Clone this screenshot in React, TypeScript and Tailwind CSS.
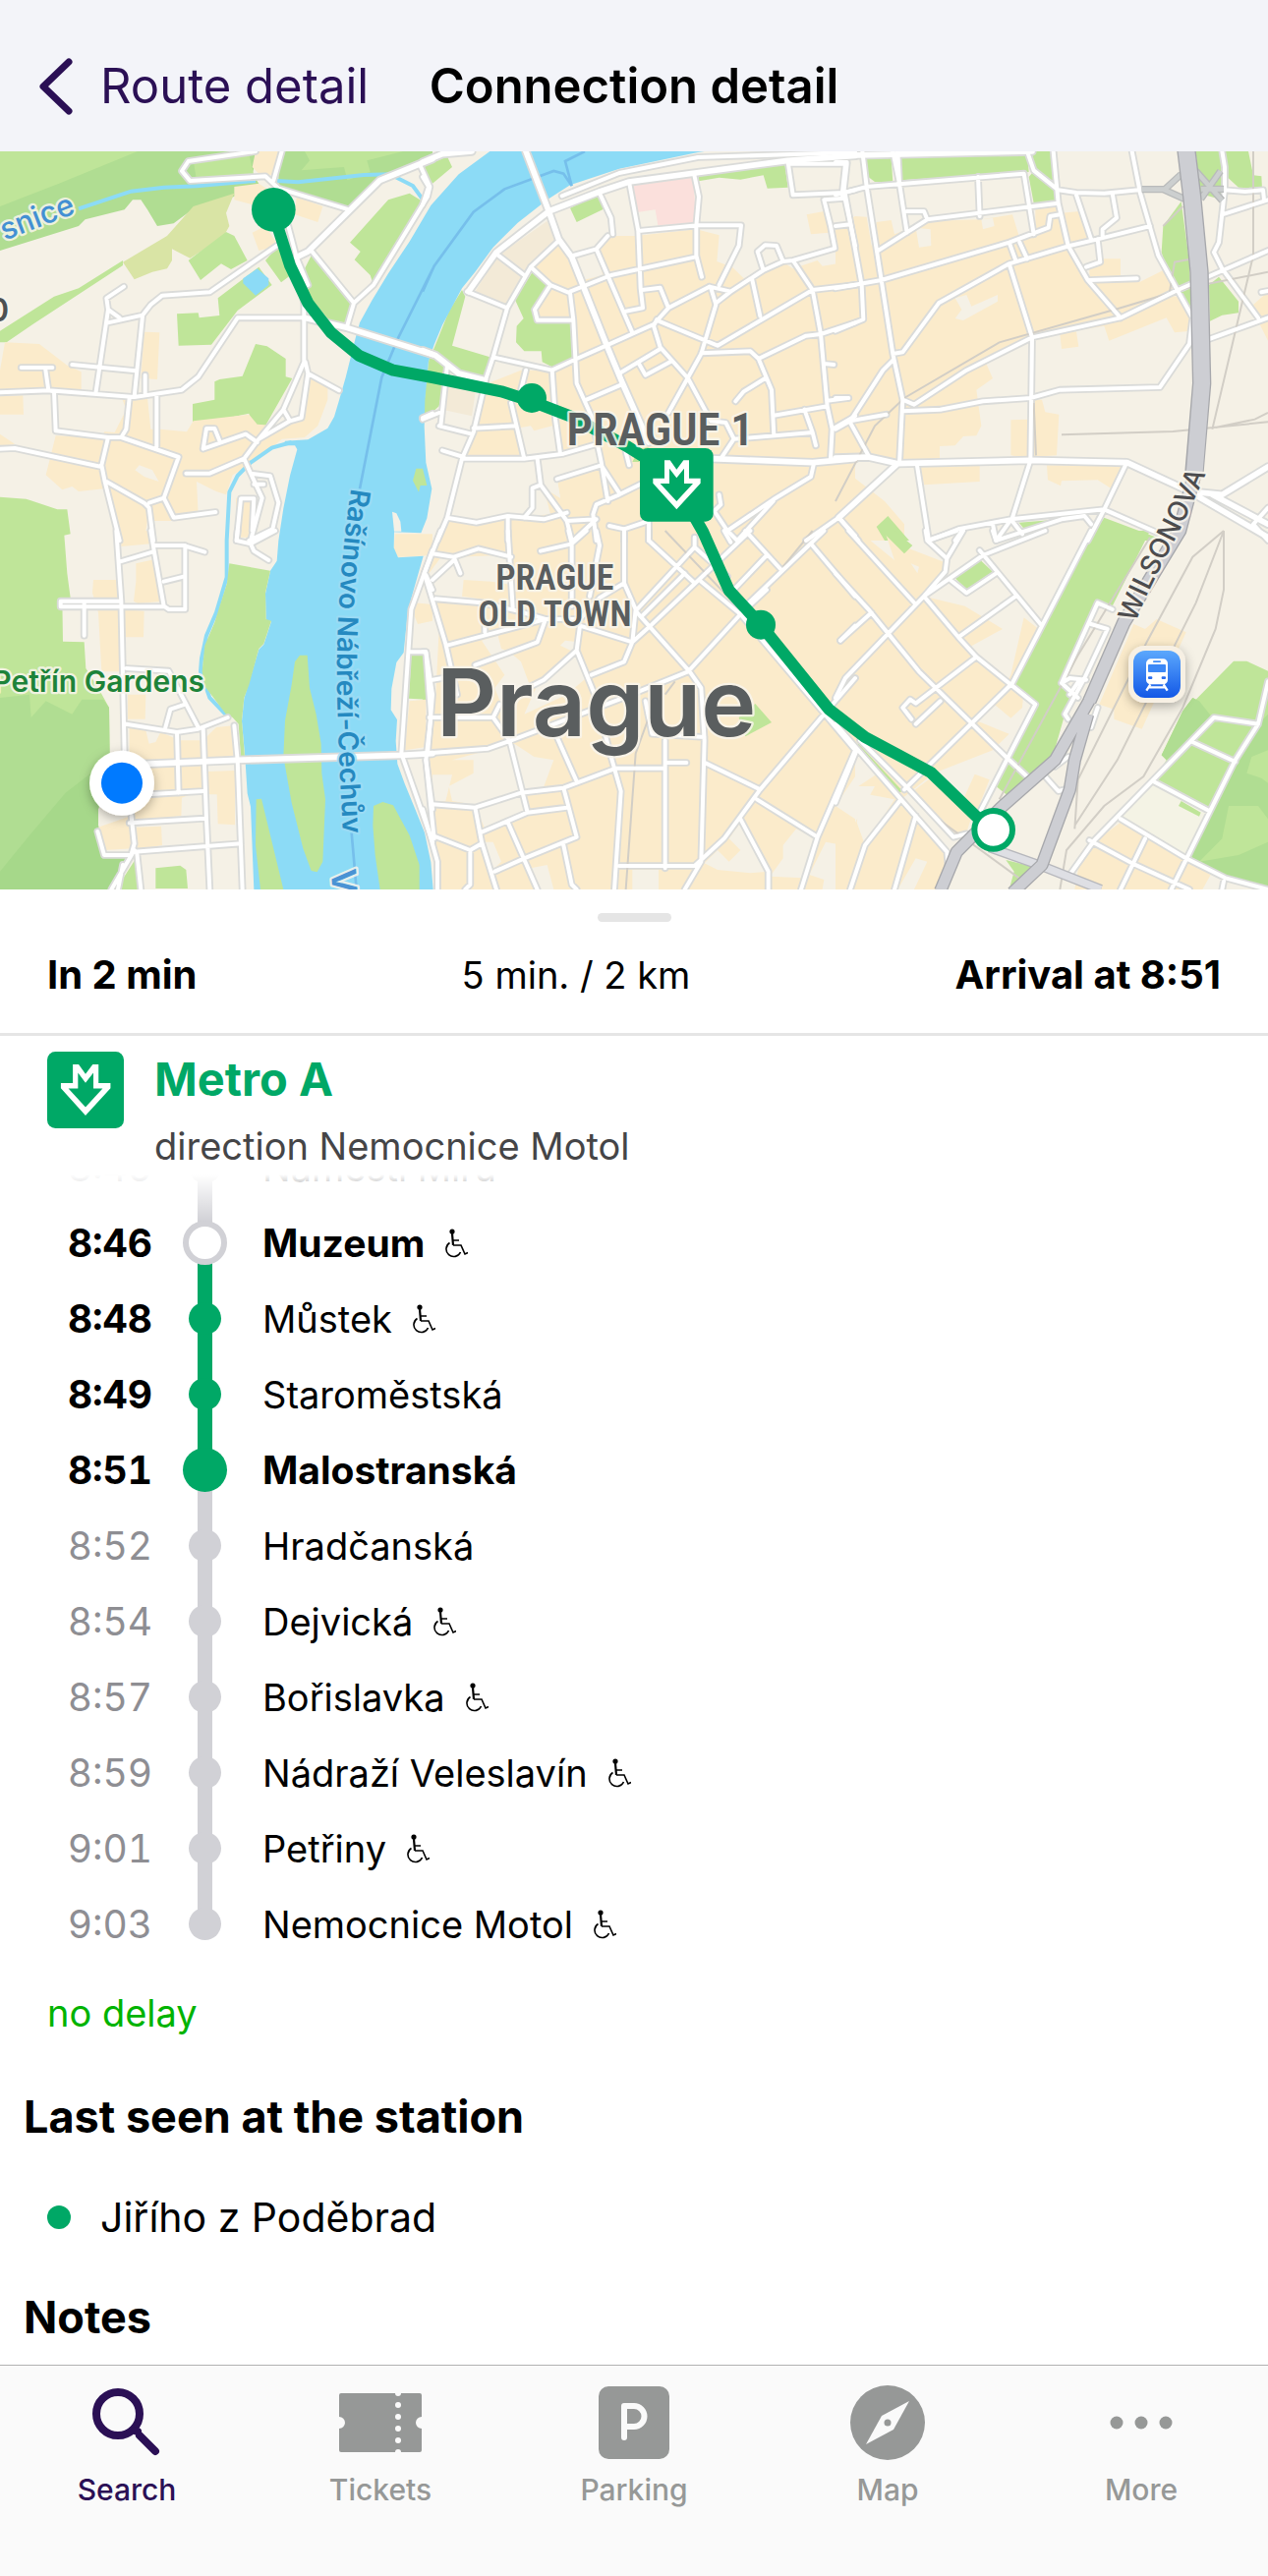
import { clsx } from "clsx";

type Area = { fill: string; d: string };

type Tile = {
  x: number;
  y: number;
  areas: Area[];
  roads: string;
  avenues?: string;
  rails?: string;
};

const GREEN = "#bfe599";
const FOREST = "#b0dd92";
const CITY = "#fbebcb";
const LAND = "#f5f1e6";
const WATER = "#8cdbf6";
const METRO = "#00a866";

// The map is split into six tiles, each with its own local coordinates
const tiles: Tile[] = [
  {
    x: 0,
    y: -12,
    areas: [
      { fill: FOREST, d: "M0 12H790L770 80 790 110 715 150 600 180 530 232 480 240 450 190 430 160H405L380 190 260 220 240 240 0 315Z" },
      { fill: GREEN, d: "M0 12H420L180 110 0 180ZM590 40 760 22 775 85 600 100Z" },
      { fill: FOREST, d: "M850 12H1320V30L1160 100 1060 185 850 120Z" },
      { fill: GREEN, d: "M870 12H930L945 40 920 70 1050 60 1060 100 1130 75 1120 40 1230 12Z" },
      { fill: "#d9e4a5", d: "M375 350 510 270 590 180 715 140 690 200 700 240 680 275 580 338 525 310V345L510 370 465 380 410 403Z" },
      { fill: GREEN, d: "M0 595V560L165 455 240 430 375 345V360L100 540 20 595ZM690 258 715 270 755 345 705 372 675 355 612 405 575 345ZM665 460 790 365 830 420 725 498 645 602 545 605 540 508 605 505 608 520 670 513Z" },
      { fill: GREEN, d: "M780 600 815 607 872 645V700L892 705 810 850 765 845 760 812 665 832 588 837V783L655 770V715L670 708 740 698ZM1185 160 1250 140 1290 165 1140 420 1130 390 1082 343 1100 318 1068 290ZM955 320 1080 475 1058 550 1020 545 940 450 930 370ZM810 345 850 300 900 380 858 412Z" },
      { fill: GREEN, d: "M0 1067 80 1073 175 1105H205L215 1180 192 1185V1200H0Z" },
      { fill: WATER, d: "M785 370 820 400V420L780 452 742 415V400Z" },
      { fill: CITY, d: "M15 595 120 600 205 665 248 685V745L0 740V680ZM0 760 70 757 72 815H0ZM440 563 487 565 480 708 430 705ZM780 12H850L830 85 790 80 770 60ZM715 120 790 110 850 150 790 180 715 160ZM905 150 985 180 970 228 900 205ZM770 260 810 240 850 300 790 315Z" },
      { fill: CITY, d: "M170 880 310 885 370 765H450L460 860H490L570 868 590 835 760 815 785 845 850 850 920 820 945 695 1000 720V770L970 850 930 885 860 890 780 960 745 980 710 1000 690 1060 660 1050 640 1040 600 1020 605 1120 530 1140H450L440 1200H365L330 1040 240 1050 220 1035 190 1045 140 1000 160 920ZM0 875 45 905 0 915ZM720 1070H770V1190H720Z" },
      { fill: LAND, d: "M425 970 465 985 485 1020 440 1005 412 985ZM180 760H370L385 800 350 870 180 855Z" },
    ],
    roads:
      "M780 12 575 42 555 72 580 102 810 88 850 125 1065 190M860 12 835 100M905 335 880 240M1280 50 1312 120 1305 150 1140 420 1080 475 1058 550M950 315 1080 475M905 335 940 420M905 335 928 480V655L865 800 790 890 745 950M928 520H725L605 700 555 740 410 762 150 742 0 748M845 300 640 442 495 452 460 480 435 512 330 535M378 425 325 460 330 495 365 520M330 495 293 745M435 515 410 760M65 672H160M138 672 148 742 165 745 170 865 330 885 370 885 545 945 500 1070 455 1085M220 663 415 682M443 695V755M478 755V915M395 765 385 860 370 885M330 885 310 970 320 1020 365 1200M0 920 45 918 310 975M325 1020 440 1085 455 1100 468 1200M500 1070 530 1130 658 1113M672 900 655 858H630L620 920 750 875 785 900M568 995H640L745 950 765 995 825 1003 850 1085 832 1165 760 1200M775 1028H805M765 995 800 1070 765 1200M775 1072H735L722 1200M775 1072 770 1170M932 655 940 690 920 825 885 835 865 800M940 690 1035 742M885 835 790 890M1290 825 1320 812",
    avenues: "M1320 35 1160 100 940 318 905 335M928 520 1058 550 1320 632",
  },
  {
    x: 1290,
    y: -12,
    areas: [
      { fill: CITY, d: "M570 270 650 270 835 250 905 268 898 348 945 365 980 400 1100 350 1130 370 1205 345 1220 362 1265 355 1262 255 1320 240V1200H45L75 1130 160 1140 390 1120 370 1040 420 1070 410 1010 545 965 535 910 420 940H130L160 850 175 800 200 720 300 680 395 680 465 650 460 530 350 525 345 500 390 425 335 365 410 290 490 405 550 390 530 320ZM1172 205 1225 195 1240 260 1185 265Z" },
      { fill: LAND, d: "M300 855 330 850 340 865 395 850 420 935 310 950ZM350 955 535 915 545 965 410 1010 420 1070 360 1030ZM0 840 50 860 150 880 125 950 75 1130 45 1040 0 1035Z" },
      { fill: GREEN, d: "M0 60 75 28 90 60 30 110ZM450 185 535 145 552 188 470 228ZM842 82 1105 48 1115 122 1052 125 1040 85 970 98 905 92 842 103ZM335 380 385 420 340 500 350 532 458 535V640L395 670 365 655 362 622H310L285 595 287 545 308 522 282 465ZM120 435 130 455 90 605 205 640 195 700 170 705 75 660 30 625 80 500ZM20 640 75 665 50 790 0 835 10 720ZM640 960 660 920 690 915 660 960Z" },
      { fill: "#fbe0dc", d: "M635 112 825 82 835 230 718 238 710 190 655 198Z" },
      { fill: "#f3ead7", d: "M230 330 380 225 415 285 310 385ZM160 440 225 335 305 395 255 485ZM75 690 165 720 150 820 60 800Z" },
    ],
    roads:
      "M425 148 600 78 840 30 1320 15M0 90 18 120 0 175M225 325 310 390M415 285 330 365 258 490 215 640 195 700 155 870 120 950 75 1130 45 1200M135 440 258 490M330 365 390 420 450 445 460 527 470 720 515 820 545 960 565 1080M390 420 342 495 350 527H460M540 140 575 215 580 265M565 270 530 310 460 330M530 310 640 565M630 105 658 255 665 430 672 490 620 500M450 440 575 390 830 335M658 255 840 238H972L965 300 905 420M828 80 843 150 835 240V330L852 395M670 435 725 428 750 490M875 425 750 490 705 540 560 605 470 645 395 680 215 640M395 680 405 830 420 935M875 425 940 440 1040 375 1100 348 1130 345 1258 308 1245 240 1225 160 1290 155M1040 375 1022 318 1045 298 1080 300 1100 348M1005 400 1030 515M1115 45 1130 145 1285 138 1320 130M1115 50H1295L1285 138 1320 300M880 430 895 480 850 630 750 810M895 475 940 440M720 530 900 605 1190 435 1320 420M1130 345 1190 435 1215 570 1235 790 1250 860 1245 950M715 525 705 545 725 610 810 705 880 835 925 840 950 890 910 950M725 615 600 690M660 660 680 695 755 655M605 725 500 770M850 628 1000 622 1025 645 1065 740 1072 880M1025 645 1170 575 1215 570 1320 535M1045 705 980 745 955 775M1072 818 1235 790M1165 800 1190 870 1200 910M950 890 1190 870M1235 773 1298 765M1225 660 1255 663M1250 860 1320 820M120 950H310L430 935 535 905M270 780 310 950M155 857 285 850M315 680 300 740M60 925 125 945M50 850 150 875M75 665 55 850M0 830 50 810M350 950 360 1030 440 1140 530 1135M410 1012 545 970 600 1055M360 1030 335 1040V1100L310 1130M75 1130 165 1145 260 1125 370 1135 440 1115M260 1125V1200M440 1140 455 1200M460 1200 530 1135M620 930 630 970M530 1200 520 1120 530 1090 600 1060 670 1025M570 1155 615 1165 690 1140M615 1165V1200M690 1140V1200M905 1060 910 1090 890 1110 930 1170 1070 1075 1185 1005 1195 960M960 1200 1070 1080M930 1170 960 1200M1170 1200 1270 1130 1320 1085M1270 1130 1320 1185",
    avenues:
      "M1320 25 1115 40 630 105 540 135 385 195 225 320 140 440M315 12 385 195 415 280 455 335 560 600 610 720 690 900M0 45 60 20 150 12M0 620 40 635 110 690 190 710M880 950 1190 962 1320 950",
  },
  {
    x: 2550,
    y: -12,
    areas: [
      { fill: CITY, d: "M0 245 60 210 95 212 110 300 125 228 170 222 180 265 280 225 445 220 540 205 560 270 610 250V190L680 175 690 200 745 195 775 280 715 300 770 400 870 520 1000 450 1080 460 1085 560 1035 565 1010 520 835 590 820 545 600 580 500 620 460 660 480 705 430 740 445 850 430 880 390 882 365 910 318 912V950L200 960 100 945 0 945Z" },
      { fill: CITY, d: "M775 370 800 340H870V390L930 410 1000 375 1040 440 870 510 775 405ZM685 570 735 562 742 608 690 615ZM535 832 590 830V950L535 940ZM605 770H630L640 808 682 815 675 940 600 945ZM258 975 440 972V1020L270 1030ZM645 970H880L840 1040 800 1015 690 1018 687 1033 648 1015ZM0 970H50L60 1010 150 1080 210 1150V1200H0ZM1275 480 1320 440V590L1295 540Z" },
      { fill: LAND, d: "M245 245 290 250 292 300 255 305ZM365 460 400 450 415 485 495 450V470L390 528 365 522 385 495ZM445 220 480 215 485 240 450 250Z" },
      { fill: GREEN, d: "M90 30H170L175 105H120L100 90ZM200 30 585 15 590 75 200 100ZM600 12H665L675 165 605 170 590 90 605 72ZM1100 12H1260L1275 85 1300 88 1302 125 1230 122 1195 90 1180 160 1110 140ZM1055 165 1080 350 1085 500 1060 460 1020 400 995 320 1000 240ZM1140 420 1170 395 1230 470V505L1180 512 1143 530ZM560 1145 690 1135 580 1170ZM820 1130 980 1190 960 1200H770ZM125 1158 160 1125 225 1200H150Z" },
    ],
    roads:
      "M82 12 95 120 140 405 175 630 205 770 195 965M175 12 195 110 218 260M190 12 195 110M0 145 95 120 575 80 605 265M435 90 440 210M218 195H270L280 220 130 315M280 220 680 170M30 50 20 145M0 45H35M30 145 80 420 85 525 0 560M0 240 45 235M0 430 140 405 530 290 650 245 655 210 685 205M530 290 550 345M562 290 585 340M585 12 605 70 680 130 735 138 820 140 925 130M665 12 680 170 710 300 770 405 870 520M735 145 780 280M845 140 858 215 815 250V275M800 280 808 350 765 365M775 405 920 400M905 12 930 140 985 330 1090 520 1080 600 990 732 685 740 595 765 450 775 320 800 205 805M175 650 145 680 45 835 0 860M175 630 205 625 315 475 530 355 715 300 800 280 960 240M530 355 600 580 595 955 540 1130 490 1200M205 770 240 785 400 680 600 580 870 520 1045 435 1320 315M45 835 155 815M45 840 100 940M0 765H40M10 1130 70 1200M248 965 285 1200 375 1165 535 1135 820 1105 885 970M480 1150 490 1200M535 1135 570 1180M365 1200 390 1165M820 1105 980 1175M820 1105 770 1200M1180 12 1188 60V130L1170 290 1155 320 1180 370 1290 520M1188 130 1250 135 1305 130 1308 160M1180 205 1320 160M1140 585 1320 520M1320 1100 1275 1150 1320 1200M1300 442 1320 438M490 1200 690 1135 760 1125 780 1150",
    avenues:
      "M0 25 600 12M0 948 100 945 190 965 595 955 890 962 1080 1050 1320 1190M1320 975 1180 1060 1080 1050M1150 1060 1320 1150M190 965 10 1130",
    rails:
      "M1275 12V330L1150 860M690 877 1030 867 1320 838M0 1080 120 850 210 765 500 595 870 490 1070 430 1320 380M1160 855 1280 830 1320 810M605 780 612 940M1000 240 1060 180M1020 440 1035 350 1090 340",
  },
  {
    x: 0,
    y: 1158,
    areas: [
      { fill: GREEN, d: "M0 0H195L205 130 215 205 190 210 192 338 257 340 262 420 300 480 333 540 335 700 300 850V900L320 990H410L340 1095H0Z" },
      { fill: FOREST, d: "M0 510 90 500 95 570 140 520 220 560 250 515 315 515 333 540 335 700 300 850V900L320 990H400L340 1095H0Z" },
      { fill: "#a6d88a", d: "M330 700 300 850V900L318 990H400L340 1095H0V1040L90 930 200 800Z" },
      { fill: GREEN, d: "M475 1030 550 1022 568 1035 573 1092H475ZM370 1070 415 1000 420 1095H360ZM1255 380H1300L1305 515 1248 512Z" },
      { fill: CITY, d: "M370 0H455L460 40 370 48ZM285 150H360L370 240 440 245 438 325H378V430H310L300 250 282 190ZM415 100 470 88 500 215 420 222 408 215 415 155ZM390 500H445L443 575H390ZM395 600 445 610 455 650 475 645 490 615 550 640H620L660 600 712 595 720 685 620 700V790L555 815 553 870 400 890V800L450 700 395 680ZM635 735 717 732V898L665 895 662 805H635ZM410 905 492 902 495 960 410 975ZM300 905 400 870 405 970 320 975ZM1250 520 1300 515V660L1235 670ZM1265 220 1320 225V275L1275 285 1265 260ZM1205 10H1320V75L1215 80 1202 60Z" },
    ],
    roads:
      "M355 0 370 215 380 680 410 955M365 95 465 65M475 45H560L625 65M460 0 470 60 500 230 515 240H565V45M500 155 560 140M370 215H185V232H500M257 215V320M385 420 515 428 605 600M385 590 540 615 605 605 695 570M565 530 520 545 505 600M540 615 545 800M620 605 630 880 640 1095M715 595 725 700 740 1095M450 805 620 795M395 892 625 878M410 980 735 955M298 918 318 990 400 990 410 955M410 975 340 1095M418 985 430 1095M375 1020 360 1095M725 0 722 30 765 40 775 62 820 90M765 40 840 0M1320 60 1255 240 1225 680 1320 950M1250 370H1300L1320 500 1305 680M1300 700 1320 850M1300 135 1320 180",
    avenues: "M440 712 725 700 1225 685 1320 680",
  },
  {
    x: 1290,
    y: 1158,
    areas: [
      { fill: CITY, d: "M55 0 10 130 50 300 40 500 20 700 35 850 45 1095H1320V0Z" },
      { fill: LAND, d: "M100 80 250 75 260 100 270 165 210 155 125 150 120 200 190 210 275 240 40 200 5 150 60 75ZM180 335 230 320 240 360 265 370 300 400 330 480 240 530 220 480 250 440ZM90 700 200 670 280 650 340 690 400 700 370 780 180 840 90 825 80 780 155 740V700ZM30 745H90L70 825H30ZM470 370 510 440 440 500 310 560 350 470ZM165 850 300 810 310 860 190 910ZM640 1035H720V1095H640ZM970 890 1055 1040 1000 1045 900 1035 860 1015 900 975 935 1010 970 975 935 940ZM1100 960 1140 910 1200 940 1160 1060 1060 1055 1100 1000ZM190 950 215 950 240 1010 215 1035ZM1320 750V880L1260 840ZM1230 950 1285 960 1270 1095 1220 1095 1225 1065 1180 1050ZM330 1030 380 1020 400 1095H350ZM420 350 435 335 475 340 460 370Z" },
      { fill: GREEN, d: "M1015 528 1065 585 985 628 965 570ZM0 380 12 400 15 515H0Z" },
    ],
    roads:
      "M55 0 5 130 70 345 105 500M30 70 95 80 170 55 270 80M95 80 115 130M95 90 30 150M40 208 180 220 290 245 375 270H480L540 205 615 160M260 0 275 235M445 0 455 40V230M360 62 455 40 500 0M530 0 540 45 510 200M615 0V160L650 240 640 340 615 400 515 440M690 0V30L825 155M650 245 830 50M670 260 800 130M690 295 1000 0M640 340 690 295M75 350 375 270 350 340 160 410M190 290V310M640 340 480 290 470 365 370 455 320 480M470 365 525 500 575 690 605 795 585 1095M650 245 815 430 850 480 860 640 850 1010 800 1095M30 455 60 450M0 370H10L25 570 10 700 35 940M20 570 215 570 235 530M215 570 265 640 320 860M0 680 200 665 270 640 600 515 810 430 970 255 1050 180M970 255 850 155M410 630 470 765M30 835 160 845 300 800 430 785 590 725H740M430 785 470 935 310 1000 220 1040M160 845 180 950 225 1095M180 920 320 860 440 845M260 890 350 1095M430 960 455 1080 470 1095M30 930 145 975V1080L130 1095M145 975 180 955M0 850 45 1010V1095M740 640V1030M600 1023H830L920 940 1030 790 1225 560 1320 450M680 520 700 620 860 630M745 708H805M865 710 1030 790M1020 820 1205 935M970 880 1055 1040V1095M1320 670 1205 935 1155 1095M970 255 1320 670M985 230 1225 0M985 0 1095 120M950 180 1050 75M920 0 940 35M1185 40 1320 200M1275 335 1320 290M830 20V50L930 140",
    rails: "M740 0 930 200M690 570 650 680 620 1095M1190 0 1100 110M770 460 740 500",
  },
  {
    x: 2550,
    y: 1158,
    areas: [
      { fill: CITY, d: "M0 0H70L180 90 150 0 200 45 330 95V130L270 200 395 230 510 300 400 360 540 465 490 530 430 580 530 620 480 670 300 740 200 820 0 590ZM535 440 575 265 620 300 550 460 575 480 570 540 535 572 485 530ZM230 800 310 740 420 860 400 920 360 935ZM400 880 390 820 425 743 470 760 430 860ZM0 850 60 890 120 780 70 780 130 740 340 980V1095H240L280 1010 245 1000 190 1095H0ZM910 285 945 300 980 270 1070 310 935 605 850 575V545L805 530ZM870 890 1145 1050 1120 1095H730L750 980Z" },
      { fill: LAND, d: "M230 100 255 110 250 130ZM60 680 150 740 90 750ZM75 800 180 820 90 960 65 890Z" },
      { fill: GREEN, d: "M790 0H960L840 240 800 220 690 460 740 510 700 560 660 700 525 808 490 780 610 530 545 465ZM365 145 440 88 480 125 400 178ZM140 0H180L235 45 210 70ZM1215 398H1255L1320 428V1090L1190 1060 1085 1000 1145 855 1110 872 1047 840 970 765 1010 700 995 685 1060 550 1090 510 1100 515ZM520 1005 620 1030 560 1095H530L545 1040ZM70 650 205 795 190 800 60 660Z" },
      { fill: FOREST, d: "M1320 560V1090L1190 1060 1085 1000 1145 855 1220 700 1290 590ZM1090 510 1110 520 1150 570 1010 700 995 685 1060 550Z" },
      { fill: GREEN, d: "M1320 670 1270 690 1255 740 1300 755 1320 770ZM1200 840 1290 840 1320 880V950L1230 990 1110 1010 1180 940Z" },
      { fill: "#f4f3e5", d: "M970 770 1140 860 1070 1000 870 880Z" },
      { fill: GREEN, d: "M1055 825 1115 860 1110 872 1047 840Z" },
    ],
    roads:
      "M0 130 105 245 255 430 520 690 590 755M40 0 245 225M0 510 30 450 270 200 450 75 640 0M15 335 110 250M275 0 280 30 340 85 335 125 270 200M280 30 370 0M340 85 390 0M440 60 630 290M270 200 375 325 430 385 610 530 440 860M780 0 540 465 210 790M350 150 400 190 490 130M375 325 550 200M430 385 245 527 228 515 205 540 232 575M245 590 320 520M480 0 490 30M0 590 200 820 340 980 345 1040M75 640 225 790 360 935 400 925M65 670 0 830M200 820 90 960 45 1095M245 870 180 1095M640 750 680 795 700 790M710 690 670 720M1320 460 1290 590 1220 700 1025 1095M1290 590 1155 570 790 945 715 1050M1090 645 1220 705M970 765 1140 855M870 880 1070 1000 1190 1060 1320 1095M775 945 905 1015 1080 1095M945 940 870 1095M1185 1070 1180 1095M845 240 800 220 690 465 740 510M780 285 830 300 760 450 700 560 710 575M690 465 715 450 765 455M715 500 745 455M800 540 780 600",
    rails:
      "M1185 0V180L1160 300 1060 540 940 750 820 840 705 975 685 1095M1185 0 1090 80 950 340 740 760 730 910M1185 0 1100 220 860 700 730 900M960 20 740 380 500 820M320 885 560 1060",
  },
];

// Two passes: grey casing below, white surface above
function Roads({ casing }: { casing: boolean }) {
  return (
    <g fill="none" stroke={casing ? "#dadbd9" : "#ffffff"} strokeLinecap="round" strokeLinejoin="round">
      {tiles.map((tile) => (
        <g key={`${tile.x}-${tile.y}`} transform={`translate(${tile.x} ${tile.y})`}>
          <path d={tile.roads} strokeWidth={casing ? 23 : 12} />
          {tile.avenues && <path d={tile.avenues} strokeWidth={casing ? 28 : 17} />}
        </g>
      ))}
    </g>
  );
}

const metroMark =
  "M75 37H92L112 65 133 37H150V92H185V107L112 187 40 107V92H75ZM90 62V108H62L112 162 162 108H135V62L112 91Z";

function MetroIcon({ className }: { className?: string }) {
  return (
    <svg viewBox="0 0 224 224" className={className} aria-hidden="true">
      <rect width="224" height="224" rx="24" fill={METRO} />
      <path d={metroMark} fill="#fff" fillRule="evenodd" />
    </svg>
  );
}

function CityMap() {
  return (
    <svg viewBox="0 0 3870 2253" className="block w-full" role="img" aria-label="Map of Prague with the metro route">
      <defs>
        <path id="embankment" d="M1072 1028C1045 1200 1032 1380 1028 1560C1028 1750 1040 1950 1050 2150" />
        <path id="wilsonova" d="M3466 1440C3510 1310 3590 1200 3690 960" />
        <linearGradient id="station" x1="0" y1="0" x2="0" y2="1">
          <stop offset="0" stopColor="#5ba8fd" />
          <stop offset="1" stopColor="#1358e6" />
        </linearGradient>
        <filter id="shadow" x="-50%" y="-50%" width="200%" height="200%">
          <feDropShadow dx="0" dy="10" stdDeviation="16" floodOpacity="0.3" />
        </filter>
      </defs>

      <rect width="3870" height="2253" fill={LAND} />
      {tiles.map((tile) => (
        <g key={`${tile.x}-${tile.y}`} transform={`translate(${tile.x} ${tile.y})`}>
          {tile.areas.map((area) => (
            <path key={area.d} d={area.d} fill={area.fill} />
          ))}
        </g>
      ))}

      {/* Vltava, its islands and the side streams */}
      <path
        fill={WATER}
        d="M1495 0 1400 70 1315 165 1250 275 1185 373 1135 455 1098 523 1085 570 1055 690 1035 760 1020 810 1000 845 940 880 870 884 865 898 900 898 907 910 885 990 865 1090 850 1188 845 1250 825 1280 810 1350 812 1430 828 1435 805 1505 790 1520 760 1620 745 1670 738 1740 748 1850 755 1960 765 2000 775 2253H1322L1315 2170 1296 2080 1268 2010 1235 1930 1213 1870 1208 1800 1212 1735 1193 1705 1195 1640 1210 1560 1232 1530 1245 1400 1265 1330 1292 1235 1215 1240 1202 1210 1203 1162 1285 1165 1303 1120 1318 1030 1300 950 1295 840 1297 760 1308 640 1325 590 1350 530 1410 418 1450 368 1505 293 1580 218 1670 148 1740 103 1890 53 2130 3 2150 0Z"
      />
      <path
        fill="none"
        stroke={WATER}
        strokeWidth="12"
        d="M890 888 830 905 765 950 725 990 700 1040 692 1188V1300L660 1408 630 1478 615 1548 612 1588 640 1668 690 1720M240 175 400 122 500 110 600 106 780 90M845 90 910 94 1110 72 1190 70 1260 105 1300 160"
      />
      <path fill="none" stroke="#76bfeb" strokeWidth="8" d="M1098 1030 1165 690 1215 570 1320 360M1290 428 1325 350 1445 185 1540 115 1690 60 1720 68 1745 105 1725 30 1785 0M1073 2080 1088 2253" />
      <path
        fill={GREEN}
        d="M700 1258 825 1280 810 1348 812 1428 828 1433 805 1503 790 1518 760 1628 745 1668 738 1738 747 1848H735L728 1748 710 1728 690 1718 625 1633 617 1588 625 1508 655 1438 693 1318ZM915 1538H938L945 1638 965 1718 980 1808 982 1898 993 1978 985 2168 968 2200 950 2196 925 2128 890 1988 865 1848 870 1738 890 1628 900 1558ZM782 1978 798 1976 830 2108 865 2253H795L780 2118ZM1140 1998 1168 1986 1200 1996 1250 2088 1280 2178V2253H1160L1145 2148 1138 2058ZM1270 968H1290L1303 1020 1283 1020 1278 1040 1260 1005Z"
      />
      <path fill={LAND} d="M1197 1100 1210 1105 1222 1130 1225 1160H1203Z" />

      <Roads casing />
      <g fill="none" stroke="#d2cec6" strokeWidth="6">
        {tiles.map((tile) => (
          <path key={`${tile.x}-${tile.y}`} d={tile.rails} transform={`translate(${tile.x} ${tile.y})`} />
        ))}
      </g>
      <Roads casing={false} />

      {/* Expressway */}
      <g fill="none" strokeLinejoin="round">
        <path stroke="#b9bbbb" strokeWidth="22" d="M3485 116H3555L3605 70M3550 116 3615 145M3650 60 3730 150M3725 60 3665 145M3665 115H3735" />
        <path stroke="#cccfcf" strokeWidth="14" d="M3485 116H3555L3605 70M3550 116 3615 145M3650 60 3730 150M3725 60 3665 145M3665 115H3735" />
        <path stroke="#b7b8bd" strokeWidth="30" d="M3020 2125 3170 2178 3360 2253" />
        <path stroke="#dedfe4" strokeWidth="22" d="M3020 2125 3170 2178 3360 2253" />
        <path stroke="#a7a8ac" strokeWidth="40" d="M3335 1658 3220 1858 3055 2003 2920 2138 2870 2258M3320 1718 3280 1858 3265 1948 3180 2178 3090 2263" />
        <path stroke="#a7a8ac" strokeWidth="58" d="M3620 -10 3638 138 3660 368 3668 708 3645 978" />
        <path stroke="#a7a8ac" strokeWidth="44" d="M3650 970 3600 1158 3430 1438 3325 1678" />
        <path stroke="#cdced3" strokeWidth="32" d="M3335 1658 3220 1858 3055 2003 2920 2138 2870 2258M3320 1718 3280 1858 3265 1948 3180 2178 3090 2263" />
        <path stroke="#cdced3" strokeWidth="50" d="M3620 -10 3638 138 3660 368 3668 708 3645 988" />
        <path stroke="#cdced3" strokeWidth="36" d="M3650 970 3600 1158 3430 1438 3325 1678" />
      </g>

      {/* Metro line A */}
      <path
        fill="none"
        stroke={METRO}
        strokeWidth="36"
        strokeLinejoin="round"
        d="M835 178 850 238 885 348 940 463 1010 553 1095 623 1200 668 1320 690 1530 733 1623 763 1740 808 1910 898 1990 948 2065 1020 2145 1160 2225 1340 2322 1445 2530 1703 2640 1788 2840 1895 2990 2040"
      />
      <g fill={METRO}>
        <circle cx="835" cy="178" r="67" />
        <circle cx="1623" cy="753" r="45" />
        <circle cx="2322" cy="1445" r="45" />
      </g>
      <circle cx="3032" cy="2071" r="58" fill="#fff" stroke={METRO} strokeWidth="18" />

      <g
        className="font-['Inter',sans-serif]"
        stroke="#f8f5ec"
        strokeOpacity="0.85"
        strokeWidth="14"
        strokeLinejoin="round"
        paintOrder="stroke"
        fontWeight="600"
      >
        <g fill="#5a5e5f" textAnchor="middle" className="font-['Roboto_Condensed','Open_Sans_Condensed','Roboto',sans-serif]" fontWeight="600">
          <text x="2015" y="898" fontSize="140">PRAGUE 1</text>
          <text x="1693" y="1338" fontSize="108">PRAGUE</text>
          <text x="1693" y="1450" fontSize="108">OLD TOWN</text>
        </g>
        <text x="1820" y="1784" fontSize="284" fill="#5a5e5f" textAnchor="middle">Prague</text>
        <text x="624" y="1650" fontSize="90" fill="#1d8339" textAnchor="end">Petřín Gardens</text>
        <text x="-36" y="518" fontSize="96" fill="#4d5051">0</text>
        <text fontSize="92" fill="#4390d3" fontWeight="500" transform="translate(14 272) rotate(-21)">snice</text>
        <text fontSize="104" fill="#4a93d4" transform="translate(1010 2192) rotate(86)">V</text>
        <text fontSize="84" fill="#2589c0" stroke="#9ddcf5">
          <textPath href="#embankment">Rašínovo Nábřeží-Čechův</textPath>
        </text>
        <text fontSize="83" fill="#4c4c4e" fontWeight="500">
          <textPath href="#wilsonova">WILSONOVA</textPath>
        </text>
      </g>

      <g transform="translate(1953 906)">
        <rect width="224" height="224" rx="24" fill={METRO} />
        <path d={metroMark} fill="#fff" fillRule="evenodd" />
      </g>

      {/* Main railway station */}
      <g transform="translate(3459 1524)">
        <rect x="-15" y="-15" width="174" height="174" rx="48" fill="#f7f0e4" filter="url(#shadow)" />
        <rect width="144" height="144" rx="36" fill="url(#station)" />
        <rect x="39" y="25" width="66" height="78" rx="14" fill="#fff" />
        <rect x="60" y="31" width="24" height="5" rx="2" fill="#3f8cf7" />
        <rect x="45" y="42" width="54" height="24" rx="3" fill="#3c88f6" />
        <rect x="45" y="79" width="13" height="8" rx="3" fill="#2a6dee" />
        <rect x="86" y="79" width="13" height="8" rx="3" fill="#2a6dee" />
        <path d="M52 103 40 122M92 103 104 122M48 112H96" stroke="#fff" strokeWidth="7" fill="none" />
      </g>

      <circle cx="372" cy="1928" r="99" fill="#fff" filter="url(#shadow)" />
      <circle cx="372" cy="1928" r="63" fill="#007aff" />
    </svg>
  );
}

type Stop = {
  time: string;
  name: string;
  accessible?: boolean;
  kind: "passed" | "start" | "ride" | "end" | "next";
};

const stops: Stop[] = [
  { time: "8:45", name: "Náměstí Míru", kind: "passed" },
  { time: "8:46", name: "Muzeum", accessible: true, kind: "start" },
  { time: "8:48", name: "Můstek", accessible: true, kind: "ride" },
  { time: "8:49", name: "Staroměstská", kind: "ride" },
  { time: "8:51", name: "Malostranská", kind: "end" },
  { time: "8:52", name: "Hradčanská", kind: "next" },
  { time: "8:54", name: "Dejvická", accessible: true, kind: "next" },
  { time: "8:57", name: "Bořislavka", accessible: true, kind: "next" },
  { time: "8:59", name: "Nádraží Veleslavín", accessible: true, kind: "next" },
  { time: "9:01", name: "Petřiny", accessible: true, kind: "next" },
  { time: "9:03", name: "Nemocnice Motol", accessible: true, kind: "next" },
];

function WheelchairIcon() {
  return (
    <svg viewBox="0 0 24 30" className="h-[30px] w-6 shrink-0" fill="none" stroke="currentColor" role="img" aria-label="Wheelchair accessible">
      <circle cx="8" cy="3" r="2.6" fill="currentColor" stroke="none" />
      <path strokeWidth="2.2" d="M8 5 9 17" />
      <path strokeWidth="1.6" d="M9 12H15M9 17H17L21 26 24 24.500" />
      <path strokeWidth="1.6" d="M5.500 14.500A7.600 7.600 0 1 0 16.500 24" />
    </svg>
  );
}

function StopRow({ stop, last }: { stop: Stop; last: boolean }) {
  const { kind } = stop;
  const onRide = kind === "start" || kind === "ride" || kind === "end";
  return (
    <li className="flex h-[77px] items-center">
      <time className={clsx("w-[155px] text-right text-[39px] tabular-nums", onRide ? "font-bold" : "text-[#8e8e93]")}>
        {stop.time}
      </time>
      <div className="ml-[31px] flex h-full w-[45px] flex-col items-center">
        <span className={clsx("-mb-1 w-[15px] flex-1", kind === "ride" || kind === "end" ? "bg-[#00a866]" : "bg-[#d1d1d6]")} />
        <span
          className={clsx(
            "z-10 shrink-0 rounded-full",
            kind === "start" && "size-[45px] border-[6px] border-[#d1d1d6] bg-white",
            kind === "ride" && "size-[33px] bg-[#00a866]",
            kind === "end" && "size-[45px] bg-[#00a866]",
            (kind === "passed" || kind === "next") && "size-[33px] bg-[#d1d1d6]",
          )}
        />
        <span
          className={clsx(
            "-mt-1 w-[15px] flex-1",
            kind === "start" || kind === "ride" ? "bg-[#00a866]" : last ? "bg-transparent" : "bg-[#d1d1d6]",
          )}
        />
      </div>
      <span className={clsx("ml-9", (kind === "start" || kind === "end") && "text-[39px] font-bold")}>{stop.name}</span>
      {stop.accessible && (
        <span className="ml-5">
          <WheelchairIcon />
        </span>
      )}
    </li>
  );
}

const tabs = [
  {
    label: "Search",
    icon: (
      <svg viewBox="0 0 76 76" className="size-[76px]" fill="none" stroke="currentColor">
        <circle cx="29" cy="29" r="22" strokeWidth="8" />
        <path d="M46 46 49 47M51 51 67 67" strokeWidth="8" strokeLinecap="round" />
      </svg>
    ),
  },
  {
    label: "Tickets",
    icon: (
      <svg viewBox="0 0 84 76" className="h-[76px] w-[84px]" fill="currentColor">
        <path d="M2 8H57A3 3 0 0 0 63 8H82A2 2 0 0 1 84 10V32A6 6 0 0 0 84 44V66A2 2 0 0 1 82 68H63A3 3 0 0 0 57 68H2A2 2 0 0 1 0 66V44A6 6 0 0 0 0 32V10A2 2 0 0 1 2 8Z" />
        <g fill="#fafafa">
          <circle cx="60" cy="20" r="3" />
          <circle cx="60" cy="32" r="3" />
          <circle cx="60" cy="44" r="3" />
          <circle cx="60" cy="56" r="3" />
        </g>
      </svg>
    ),
  },
  {
    label: "Parking",
    icon: (
      <svg viewBox="0 0 76 76" className="size-[76px]" fill="none">
        <rect x="2" y="1" width="72" height="74" rx="10" fill="currentColor" />
        <path d="M28 53V21H38A10 10 0 0 1 38 42H28" stroke="#fafafa" strokeWidth="6" strokeLinecap="round" strokeLinejoin="round" />
      </svg>
    ),
  },
  {
    label: "Map",
    icon: (
      <svg viewBox="0 0 76 76" className="size-[76px]">
        <circle cx="38" cy="38" r="38" fill="currentColor" />
        <path d="M60 16 32 31 16 60 44 45Z" fill="#fafafa" />
        <circle cx="38" cy="38" r="3.500" fill="currentColor" />
      </svg>
    ),
  },
  {
    label: "More",
    icon: (
      <svg viewBox="0 0 76 76" className="size-[76px]" fill="currentColor">
        <circle cx="13" cy="38" r="6.500" />
        <circle cx="38" cy="38" r="6.500" />
        <circle cx="63" cy="38" r="6.500" />
      </svg>
    ),
  },
];

export default function App() {
  return (
    <div className="flex min-h-screen flex-col bg-white font-['Inter','Noto_Sans',sans-serif] text-[38px] leading-[48px] text-black">
      <header className="grid h-[154px] grid-cols-[1fr_auto_1fr] items-center bg-[#f3f4f9] pt-[22px]">
        <button type="button" className="flex items-center gap-7 pl-10 text-[49px] text-[#2b1055]">
          <svg viewBox="0 0 34 58" className="h-[58px] w-[34px]" fill="none" stroke="currentColor" strokeWidth="7" strokeLinecap="round" strokeLinejoin="round" aria-hidden="true">
            <path d="M30 4 4 29 30 54" />
          </svg>
          Route detail
        </button>
        <h1 className="text-[49px] font-semibold">Connection detail</h1>
      </header>

      <CityMap />

      <main className="flex flex-1 flex-col">
        <div className="mx-auto mt-6 h-[9px] w-[75px] rounded-full bg-[#e5e5e5]" />
        <div className="flex justify-between border-b-3 border-[#e5e5e5] px-12 pt-[30px] pb-[35px]">
          <strong className="text-[40px] font-bold">In 2 min</strong>
          <span>5 min. / 2 km</span>
          <strong className="text-[40px] font-bold">Arrival at 8:51</strong>
        </div>

        <div className="flex h-[141px] gap-[31px] px-12 pt-4">
          <MetroIcon className="size-[78px] shrink-0" />
          <div>
            <h2 className="text-[47px] leading-[56px] font-bold text-[#00a866]">Metro A</h2>
            <p className="pt-4 text-[#454547]">direction Nemocnice Motol</p>
          </div>
        </div>

        <div className="relative overflow-hidden">
          <ol className="-mt-[46px]">
            {stops.map((stop, i) => (
              <StopRow key={stop.name} stop={stop} last={i === stops.length - 1} />
            ))}
          </ol>
          <div className="absolute inset-x-0 top-0 z-20 h-12 bg-linear-to-b from-white to-transparent" />
        </div>

        <p className="px-12 pt-7 text-[#00b300]">no delay</p>

        <h3 className="px-6 pt-[54px] text-[45px] leading-[56px] font-bold">Last seen at the station</h3>
        <p className="flex items-center gap-[30px] px-12 pt-[46px] text-[41px] leading-[56px]">
          <span className="size-6 rounded-full bg-[#00a866]" />
          Jiřího z Poděbrad
        </p>
        <h3 className="px-6 pt-[46px] text-[45px] leading-[56px] font-bold">Notes</h3>
      </main>

      <nav className="grid h-[215px] grid-cols-5 items-start border-t border-[#b2b2b2] bg-[#fafafa]">
        {tabs.map((tab, i) => (
          <button
            key={tab.label}
            type="button"
            className={clsx(
              "flex flex-col items-center gap-3 pt-5 text-[30px] leading-9 font-medium",
              i === 0 ? "text-[#2b1055]" : "text-[#969897]",
            )}
          >
            {tab.icon}
            {tab.label}
          </button>
        ))}
      </nav>
    </div>
  );
}
